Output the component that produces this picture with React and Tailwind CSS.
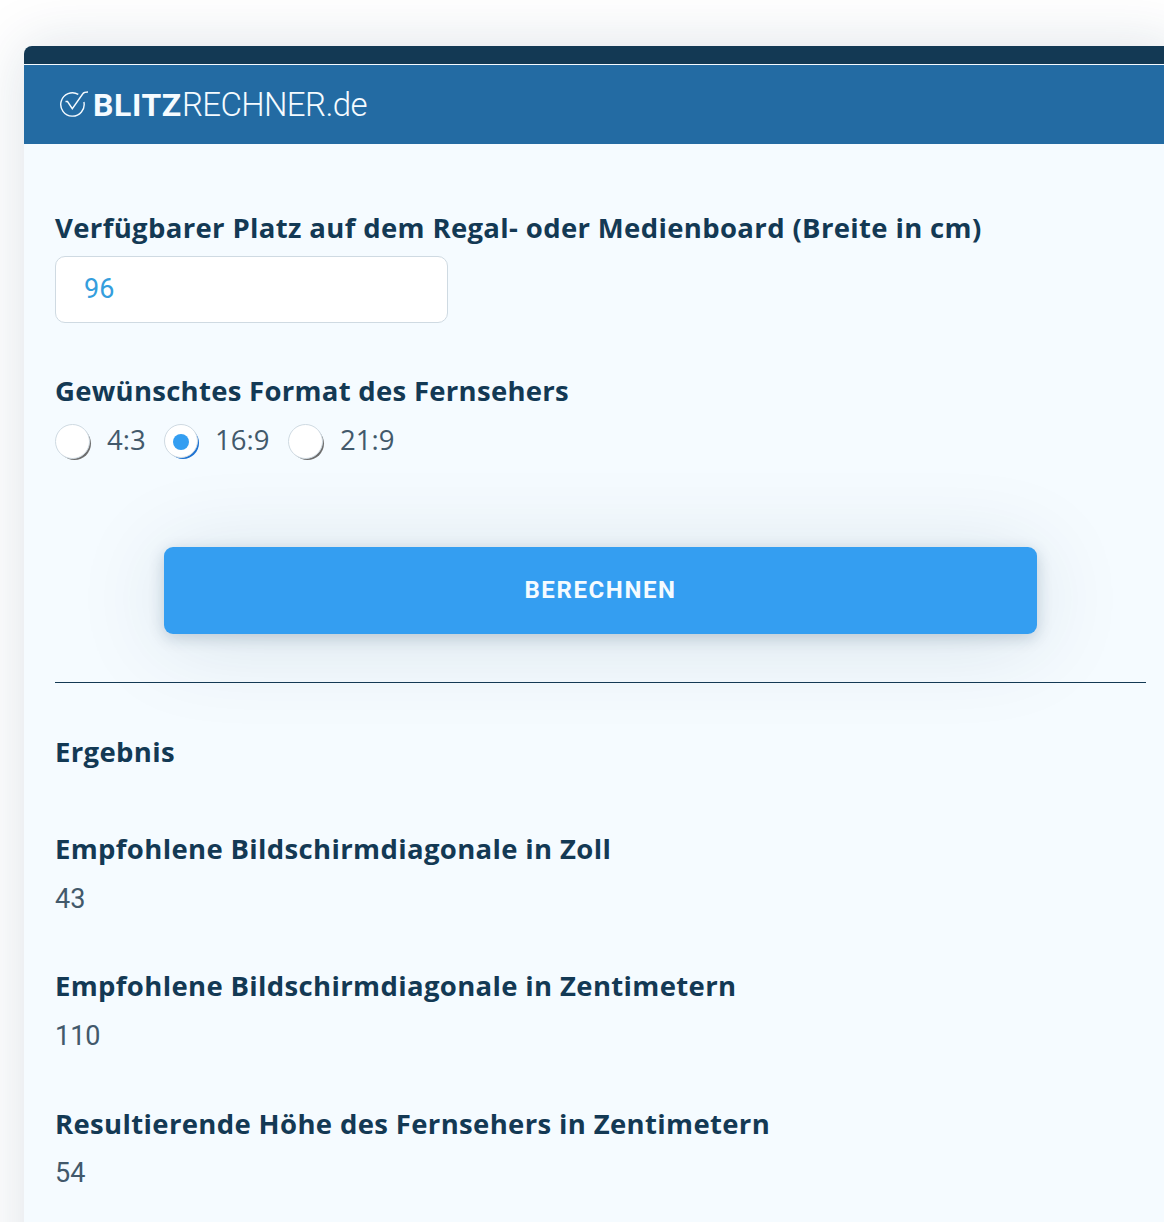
const results = [
  ['Empfohlene Bildschirmdiagonale in Zoll', '43'],
  ['Empfohlene Bildschirmdiagonale in Zentimetern', '110'],
  ['Resultierende Höhe des Fernsehers in Zentimetern', '54'],
];

function Heading({ children, tracking = 'tracking-[0.35px]' }) {
  return (
    <h2 className={`h-11 whitespace-nowrap font-['Open_Sans',sans-serif] text-[27.5px] leading-[43px] font-bold text-[#133954] ${tracking}`}>
      {children}
    </h2>
  );
}

function Radio({ label, checked, className }) {
  return (
    <label className={`flex items-center ${className}`}>
      <span
        className={
          checked
            ? 'flex size-[34px] shrink-0 items-center justify-center rounded-full border border-[#cfdae2] bg-white shadow-[2px_2px_0_-1px_#1d72d2]'
            : 'flex size-[35px] shrink-0 items-center justify-center rounded-full border border-[#cfdae2] bg-white shadow-[2px_2px_0_-1px_#6e6e6e]'
        }
      >
        {checked && <span className="mt-px size-4 rounded-full bg-[#349ef1]" />}
      </span>
      <span className="ml-[17px] -mt-0.5 whitespace-nowrap font-['Open_Sans',sans-serif] text-[27.5px] leading-9 text-[#42596b]">{label}</span>
    </label>
  );
}

function Logo() {
  return (
    <div className="flex h-[79px] items-center bg-[#236ba3] pl-9 text-[#f5fbff]">
      <svg className="-mt-px h-7 w-[29px] shrink-0" viewBox="0 0 29 28" fill="none" stroke="currentColor" strokeWidth="1.4">
        <path d="M18.3 4.3A11.7 11.7 0 1 0 23.9 12" />
        <path d="M5.5 11.5h2l4.8 7.2L23 3.5Q24 2 28 2" />
      </svg>
      <div className="ml-1 flex items-baseline whitespace-nowrap font-[Roboto,sans-serif] text-[32px] leading-10">
        <span className="font-bold tracking-[0.6px]">BLITZ</span>
        <span className="text-[33px] font-light tracking-[-0.6px]">RECHNER.de</span>
      </div>
    </div>
  );
}

export default function App() {
  return (
    <div className="h-[1222px] overflow-hidden bg-white pt-[46px] pl-6">
      <main className="h-[1300px] w-[1154px] rounded-tl-lg bg-[#f5fbff] shadow-[0_0_60px_rgba(19,57,84,0.15)]">
        <div className="h-[19px] rounded-tl-lg border-b border-[#f5fbff] bg-[#133954]" />
        <Logo />
        <div className="ml-[31px] w-[1091px] pt-[62px]">
          <Heading>Verfügbarer Platz auf dem Regal- oder Medienboard (Breite in cm)</Heading>
          <input
            className="mt-[6px] block h-[67px] w-[393px] rounded-[10px] border border-[#cfdae2] bg-white px-7 pb-0.5 font-[Roboto,sans-serif] text-[27px] text-[#349edd] outline-none"
            defaultValue="96"
          />
          <div className="mt-[46px]">
            <Heading tracking="tracking-[0.28px]">Gewünschtes Format des Fernsehers</Heading>
          </div>
          <div className="mt-[10px] flex h-9">
            <Radio label="4:3" className="w-[109px]" />
            <Radio label="16:9" checked className="w-[124px]" />
            <Radio label="21:9" />
          </div>
          <button className="mx-auto mt-[88px] block h-[87px] w-[873px] rounded-[9px] bg-[#349ef1] pb-0.5 text-center font-[Roboto,sans-serif] text-[24px] font-bold tracking-[1.6px] text-[#f5fbff] shadow-[0_8px_90px_rgba(19,57,84,0.13),0_4px_16px_rgba(19,57,84,0.2)]">
            BERECHNEN
          </button>
          <hr className="mt-12 border-[#133954]" />
          <div className="mt-[47px]">
            <Heading>Ergebnis</Heading>
          </div>
          <div className="mt-[53px] flex flex-col gap-[43.4px]">
            {results.map(([title, value]) => (
              <section key={title} className="h-[94px]">
                <Heading>{title}</Heading>
                <p className="mt-[5.6px] font-[Roboto,sans-serif] text-[27px] leading-[44px] text-[#42596b]">{value}</p>
              </section>
            ))}
          </div>
        </div>
      </main>
    </div>
  );
}
